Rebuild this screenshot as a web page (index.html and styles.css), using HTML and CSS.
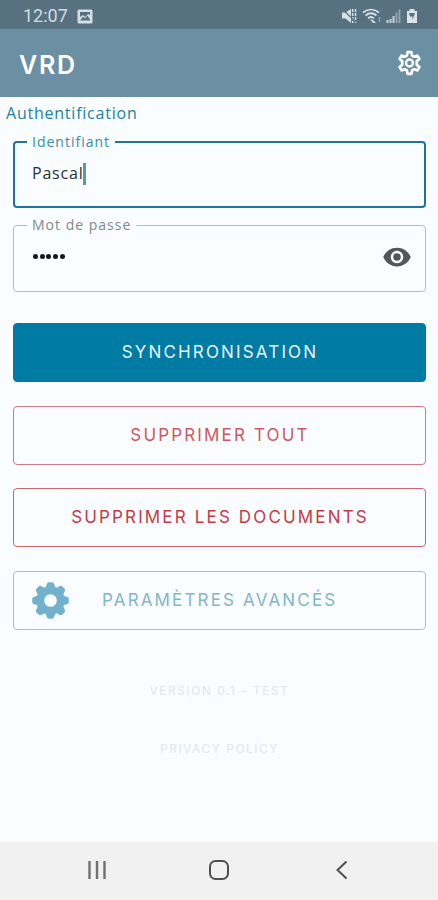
FILE: index.html
```html
<!DOCTYPE html>
<html lang="fr">
<head>
    <meta charset="UTF-8">
    <meta name="viewport" content="width=device-width, initial-scale=1.0">
    <title>VRD - Authentification</title>
    <link rel="stylesheet" href="styles.css">
</head>
<body>
    <div class="status-bar">
        <span class="clock">12:07</span>
        <svg class="status-picture" width="16" height="15" viewBox="0 0 16 15">
            <rect x="0.5" y="0.5" width="15" height="14" rx="1.5" fill="#d5dfe6"/>
            <path d="M3 11.500l3-4 2 2 2.500-3 3 5z" fill="#587181"/>
            <path d="M3 3h10v3l-2-1-3 3-2-2-3 2z" fill="#587181"/>
        </svg>
        <div class="status-icons">
            <svg width="16" height="16" viewBox="0 0 16 16">
                <path d="M1 4.500h3.500L10 1v14l-5.500-4.500H1z" fill="#d5dfe6"/>
                <path d="M11.700 1v14M14.500 1v14" stroke="#d5dfe6" stroke-width="1.500" stroke-dasharray="3 1" fill="none"/>
                <path d="M1 1l14 13" stroke="#587181" stroke-width="1.200"/>
            </svg>
            <svg width="19" height="16" viewBox="0 0 19 16">
                <g fill="none" stroke="#d5dfe6" stroke-width="1.700">
                    <path d="M1 4.500q8-6 16 0"/>
                    <path d="M3.500 7.500q5.500-4.500 11 0"/>
                    <path d="M6 10.300q3-2.600 6 0"/>
                </g>
                <path d="M8 11l3 1 3 3h-3z" fill="#d5dfe6"/>
                <path d="M17.500 9v5" stroke="#8fa3b0" stroke-width="1.500"/>
            </svg>
            <svg width="15" height="16" viewBox="0 0 15 16">
                <path d="M1.500 12v3M4.500 11v4M7.500 8v7" stroke="#c3d0d8" stroke-width="2"/>
                <path d="M10.500 4.500V15M13.500 1.500V15" stroke="#94a7b3" stroke-width="1.800"/>
            </svg>
            <svg class="battery" width="12" height="16" viewBox="0 0 12 16">
                <path d="M3.500 1h5v2H11v12H1V3h2.500z" fill="#dce4ea"/>
                <path d="M3 5h6L6.500 12V8.500H4z" fill="#587181"/>
            </svg>
        </div>
    </div>

    <header class="app-bar">
        <h1>VRD</h1>
        <svg class="settings-icon" width="29" height="30" viewBox="0 0 24 24">
            <path fill="none" stroke="#fff" stroke-width="2.200" stroke-linejoin="round" d="M10.400 3h3.200l.5 2.800 1.800 1.050 2.700-1 1.600 2.800-2.200 1.800v3.100l2.200 1.800-1.600 2.800-2.700-1-1.800 1.050-.5 2.800h-3.200l-.5-2.800-1.800-1.050-2.700 1-1.600-2.800L6 13.550v-3.100l-2.200-1.800 1.600-2.800 2.700 1L9.900 5.800z"/>
            <circle cx="12" cy="12" r="2.900" fill="none" stroke="#fff" stroke-width="2"/>
        </svg>
    </header>

    <main class="content">
        <h2>Authentification</h2>

        <fieldset class="field focused">
            <legend>Identifiant</legend>
            <span class="value">Pascal</span><span class="caret"></span>
        </fieldset>

        <fieldset class="field password">
            <legend>Mot de passe</legend>
            <span class="dots"><i></i><i></i><i></i><i></i><i></i></span>
            <svg class="eye" width="30" height="30" viewBox="0 0 24 24">
                <path fill="#54575a" d="M12 4.500C7 4.500 2.730 7.610 1 12c1.730 4.390 6 7.500 11 7.500s9.270-3.110 11-7.500c-1.730-4.390-6-7.500-11-7.500zM12 17c-2.760 0-5-2.240-5-5s2.240-5 5-5 5 2.240 5 5-2.240 5-5 5zm0-8a3 3 0 1 0 0 6 3 3 0 0 0 0-6z"/>
            </svg>
        </fieldset>

        <div class="actions">
            <button class="btn btn-primary">SYNCHRONISATION</button>
            <button class="btn btn-danger">SUPPRIMER TOUT</button>
            <button class="btn btn-danger strong">SUPPRIMER LES DOCUMENTS</button>
            <button class="btn btn-advanced">
                <svg width="37" height="37" viewBox="-19 -19 38 38">
                    <g fill="#72b1cb">
                        <path id="tooth" d="M-5.500-12L-3.600-17.300Q-3-18.800-1.600-18.800H1.600Q3-18.800 3.600-17.300L5.500-12z"/>
                        <use href="#tooth" transform="rotate(45)"/>
                        <use href="#tooth" transform="rotate(90)"/>
                        <use href="#tooth" transform="rotate(135)"/>
                        <use href="#tooth" transform="rotate(180)"/>
                        <use href="#tooth" transform="rotate(225)"/>
                        <use href="#tooth" transform="rotate(270)"/>
                        <use href="#tooth" transform="rotate(315)"/>
                    </g>
                    <circle r="10.500" fill="none" stroke="#72b1cb" stroke-width="8"/>
                </svg>
                <span class="advanced">PARAMÈTRES AVANCÉS</span>
            </button>
        </div>

        <div class="footer">
            <p>VERSION 0.1 - TEST</p>
            <p>PRIVACY POLICY</p>
        </div>
    </main>

    <nav class="nav-bar">
        <svg width="20" height="20" viewBox="0 0 20 20">
            <path d="M2.500 1v18M10 1v18M17.500 1v18" stroke="#707070" stroke-width="2.400"/>
        </svg>
        <svg class="home" width="22" height="22" viewBox="0 0 22 22">
            <rect x="2" y="2" width="18" height="18" rx="5.500" fill="none" stroke="#505050" stroke-width="2"/>
        </svg>
        <svg width="14" height="20" viewBox="0 0 14 20">
            <path d="M11.500 1.500L2.500 10l9 8.500" fill="none" stroke="#505050" stroke-width="2"/>
        </svg>
    </nav>
</body>
</html>
```

FILE: styles.css
```css
* {
    box-sizing: border-box;
}
body {
    margin: 0;
    height: 900px;
    display: flex;
    flex-direction: column;
    background-color: #f9fdff;
    font-family: "Open Sans", "Noto Sans", sans-serif;
    overflow: hidden;
}
svg {
    display: block;
    flex: none;
}
.status-bar {
    height: 29px;
    background-color: #587181;
    display: flex;
    align-items: center;
    padding: 3px 20px 0 23px;
}
.clock {
    font-family: Roboto, sans-serif;
    font-size: 18px;
    line-height: 20px;
    color: #d0dbe3;
    width: 54px;
}
.status-icons {
    display: flex;
    gap: 5px;
    margin-left: auto;
}
.app-bar {
    height: 68px;
    background-color: #6b8fa3;
    display: flex;
    align-items: center;
    justify-content: space-between;
    padding: 0 14px 0 19px;
}
.app-bar h1 {
    margin: 3px 0 0;
    font-family: Inter, sans-serif;
    font-size: 25px;
    font-weight: 600;
    letter-spacing: 1.7px;
    color: #fff;
}
.content {
    flex: 1;
    padding: 0 12px 0 13px;
}
h2 {
    margin: 4px 0 7px -7px;
    font-size: 16px;
    line-height: 24px;
    font-weight: 400;
    letter-spacing: 0.77px;
    color: #23809b;
}
.field {
    height: 76px;
    margin: 0 0 7px;
    padding: 0 12px;
    border: 1px solid #a1c3d2;
    border-radius: 4px;
    display: flex;
}
.field legend {
    padding: 0 5px 0 5px;
    font-size: 14px;
    line-height: 20px;
    letter-spacing: 1px;
    color: #83898d;
}
.focused {
    border: 2px solid #22739b;
}
.focused legend {
    color: #3b8ba5;
}
.value {
    margin-left: 5px;
    padding-top: 10px;
    font-size: 16px;
    line-height: 22px;
    letter-spacing: 0.8px;
    color: #2c2f31;
}
.caret {
    width: 3px;
    height: 22px;
    margin: 11px 0 0 -1px;
    background-color: #569aab;
}
.password {
    height: 77px;
    margin-bottom: 31px;
    padding: 0 13px;
}
.dots {
    display: flex;
    gap: 1.7px;
    padding: 19px 0 0 6px;
}
.dots i {
    width: 5px;
    height: 5px;
    border-radius: 50%;
    background-color: #151719;
}
.eye {
    margin: 7px 0 0 auto;
}
.actions {
    display: flex;
    flex-direction: column;
    gap: 23.7px;
}
.btn {
    height: 59px;
    padding: 0 0 1px 1px;
    border: 1px solid;
    border-radius: 4px;
    background-color: transparent;
    font-family: Inter, sans-serif;
    font-size: 17px;
    letter-spacing: 2.15px;
    display: flex;
    align-items: center;
    justify-content: center;
    white-space: nowrap;
}
.btn-primary {
    background-color: #007ba4;
    border-color: #007ba4;
    color: #e9f5fa;
}
.btn-danger {
    color: #cf5860;
    border-color: #cf7d82;
}
.btn-danger.strong {
    color: #c63a46;
    border-color: #c9666d;
}
.btn-advanced {
    justify-content: flex-start;
    padding-left: 18px;
    color: #82b6c8;
    border-color: #9cc5d4;
}
.advanced {
    margin-left: 33px;
}
.footer {
    padding-top: 51px;
    text-align: center;
    font-family: Inter, sans-serif;
    font-size: 12px;
    color: #e1e6e9;
}
.footer p {
    margin: 0 0 38px;
    line-height: 20px;
    letter-spacing: 1.5px;
}
.nav-bar {
    height: 58px;
    background-color: #f1f1f1;
    display: flex;
    align-items: center;
    justify-content: space-between;
    padding: 0 89px 2px 87px;
}
.home {
    margin-right: 4px;
}
```
